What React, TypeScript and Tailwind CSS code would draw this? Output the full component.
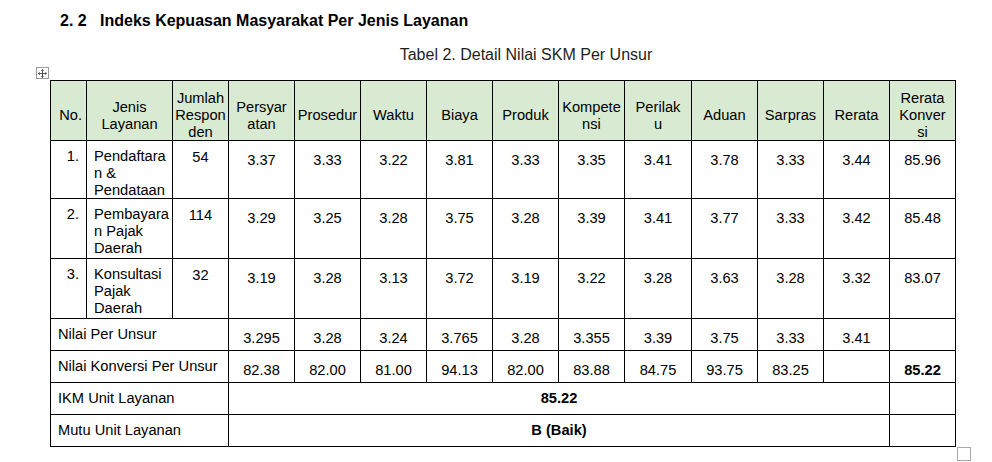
import * as React from 'react'

const headers: string[][] = [
  ['No.'],
  ['Jenis', 'Layanan'],
  ['Jumlah', 'Respon', 'den'],
  ['Persyar', 'atan'],
  ['Prosedur'],
  ['Waktu'],
  ['Biaya'],
  ['Produk'],
  ['Kompete', 'nsi'],
  ['Perilak', 'u'],
  ['Aduan'],
  ['Sarpras'],
  ['Rerata'],
  ['Rerata', 'Konver', 'si'],
]

const rows = [
  {
    no: '1.',
    name: ['Pendaftara', 'n &', 'Pendataan'],
    n: '54',
    v: ['3.37', '3.33', '3.22', '3.81', '3.33', '3.35', '3.41', '3.78', '3.33', '3.44', '85.96'],
  },
  {
    no: '2.',
    name: ['Pembayara', 'n Pajak', 'Daerah'],
    n: '114',
    v: ['3.29', '3.25', '3.28', '3.75', '3.28', '3.39', '3.41', '3.77', '3.33', '3.42', '85.48'],
  },
  {
    no: '3.',
    name: ['Konsultasi', 'Pajak', 'Daerah'],
    n: '32',
    v: ['3.19', '3.28', '3.13', '3.72', '3.19', '3.22', '3.28', '3.63', '3.28', '3.32', '83.07'],
  },
]

const nilai = ['3.295', '3.28', '3.24', '3.765', '3.28', '3.355', '3.39', '3.75', '3.33', '3.41', '']
const konversi = ['82.38', '82.00', '81.00', '94.13', '82.00', '83.88', '84.75', '93.75', '83.25', '', '85.22']

const cell = 'border-r border-b border-black'

function Lines({ lines }: { lines: string[] }) {
  return (
    <div>
      {lines.map((l, i) => (
        <div key={i}>{l}</div>
      ))}
    </div>
  )
}

function MoveHandle() {
  return (
    <div className="ml-[36px] flex h-[12px] w-[13px] items-center justify-center border border-[#9a9a9a] bg-white">
      <svg width="9" height="9" viewBox="0 0 9 9" fill="none" stroke="#444" strokeWidth="0.9">
        <path d="M4.5 0.5v8M0.5 4.5h8" />
        <path d="M3.3 1.7 4.5 0.5 5.7 1.7M3.3 7.3 4.5 8.5 5.7 7.3M1.7 3.3 0.5 4.5 1.7 5.7M7.3 3.3 8.5 4.5 7.3 5.7" />
      </svg>
    </div>
  )
}

export default function App() {
  return (
    <main
      className="h-[462px] w-[992px] overflow-hidden bg-white pt-[11px] text-black"
      style={{ fontFamily: '"Liberation Sans", Arial, sans-serif' }}
    >
      <h1 className="flex pl-[60px] text-[16px] font-bold leading-[20px]">
        <span className="w-[40px]">2. 2</span>
        <span>Indeks Kepuasan Masyarakat Per Jenis Layanan</span>
      </h1>

      <div className="mt-[14px] flex justify-center pl-[60px] text-[16px] leading-[20px] text-[#1e1e1e]">
        Tabel 2. Detail Nilai SKM Per Unsur
      </div>

      <div className="h-[15px] pt-[2px]">
        <MoveHandle />
      </div>

      <div className="ml-[50px] grid w-fit grid-cols-[36px_86px_56px_66px_66px_66px_66px_66px_66px_67px_66px_66px_66px_66px] grid-rows-[60px_58px_60px_60px_32px_32px_32px_32px] border-l border-t border-black text-[14.67px] leading-[16.8px]">
        {headers.map((h, i) => (
          <div
            key={i}
            className={`${cell} flex items-center bg-[#d9ead3] pt-[10px] ${
              i === 0 ? 'justify-end pr-[4px] text-right' : 'justify-center text-center'
            }`}
          >
            <Lines lines={h} />
          </div>
        ))}

        {rows.map((r) => (
          <React.Fragment key={r.no}>
            <div className={`${cell} pr-[7px] pt-[7px] text-right`}>{r.no}</div>
            <div className={`${cell} pl-[7px] pt-[7px]`}>
              <Lines lines={r.name} />
            </div>
            <div className={`${cell} pt-[8px] text-center`}>{r.n}</div>
            {r.v.map((v, i) => (
              <div key={i} className={`${cell} pt-[11px] text-center`}>
                {v}
              </div>
            ))}
          </React.Fragment>
        ))}

        <div className={`${cell} col-span-3 pl-[7px] pt-[7px]`}>Nilai Per Unsur</div>
        {nilai.map((v, i) => (
          <div key={i} className={`${cell} pt-[11px] text-center`}>
            {v}
          </div>
        ))}

        <div className={`${cell} col-span-3 pl-[7px] pt-[7px]`}>Nilai Konversi Per Unsur</div>
        {konversi.map((v, i) => (
          <div key={i} className={`${cell} pt-[11px] text-center ${i === konversi.length - 1 ? 'font-bold' : ''}`}>
            {v}
          </div>
        ))}

        <div className={`${cell} col-span-3 pl-[7px] pt-[7px]`}>IKM Unit Layanan</div>
        <div className={`${cell} col-span-10 pt-[7px] text-center font-bold`}>85.22</div>
        <div className={cell} />

        <div className={`${cell} col-span-3 pl-[7px] pt-[7px]`}>Mutu Unit Layanan</div>
        <div className={`${cell} col-span-10 pt-[7px] text-center font-bold`}>B (Baik)</div>
        <div className={cell} />
      </div>

      <div className="ml-[957px] h-[14px] w-[14px] border border-[#a6a6a6]" />
    </main>
  )
}
